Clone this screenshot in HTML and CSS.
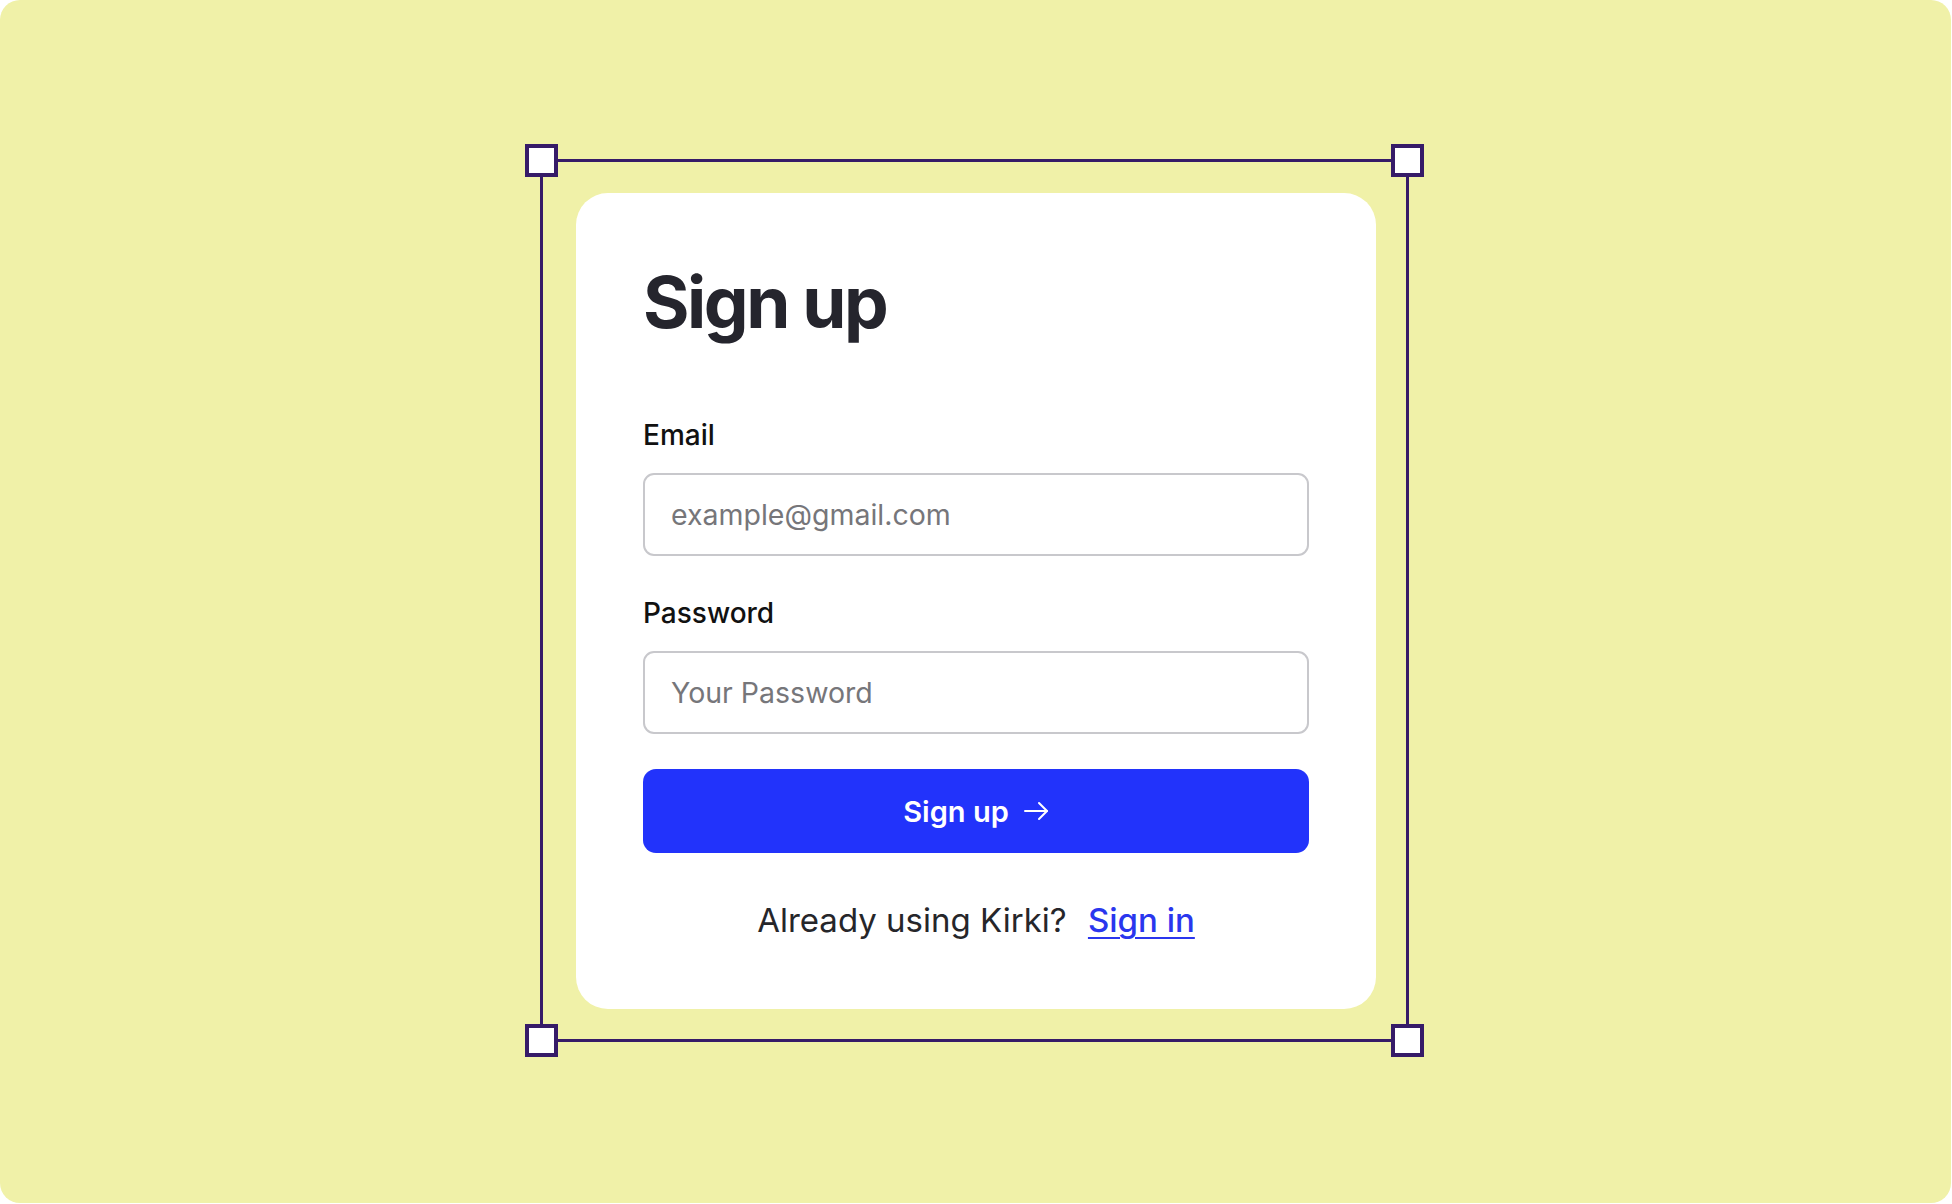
FILE: index.html
```html
<!DOCTYPE html>
<html lang="en">
<head>
<meta charset="utf-8">
<title>Sign up</title>
<link rel="stylesheet" href="styles.css">
</head>
<body>
<div class="page">
  <div class="frame">
    <span class="handle handle-tl"></span>
    <span class="handle handle-tr"></span>
    <span class="handle handle-bl"></span>
    <span class="handle handle-br"></span>
    <form class="card">
      <h1 class="title">Sign up</h1>
      <label class="label" for="email">Email</label>
      <input class="input" id="email" type="email" placeholder="example@gmail.com">
      <label class="label label-gap" for="password">Password</label>
      <input class="input" id="password" type="password" placeholder="Your Password">
      <button class="button" type="button">
        <span>Sign up</span>
        <svg class="arrow" viewBox="0 0 26 20" width="26" height="20" fill="none" stroke="#fff" stroke-width="2" stroke-linecap="round" stroke-linejoin="round"><path d="M2 10H24"/><path d="M16 2L24 10L16 18"/></svg>
      </button>
      <p class="footer">Already using Kirki? <a class="link" href="#">Sign in</a></p>
    </form>
  </div>
</div>
</body>
</html>
```
FILE: styles.css
```css
* { box-sizing: border-box; }

html, body {
  margin: 0;
  padding: 0;
  background: #ffffff;
}

body {
  font-family: "Inter", "Noto Sans", sans-serif;
  width: 1952px;
  height: 1204px;
  overflow: hidden;
}

.page {
  width: 1951px;
  height: 1203px;
  background: #f0f1a8;
  border-radius: 20px;
  display: flex;
  justify-content: center;
  align-items: flex-start;
  padding-top: 159px;
  padding-right: 2px;
}

.frame {
  position: relative;
  border: 3px solid #361b68;
  padding: 31px 30px 30px 33px;
}

.handle {
  position: absolute;
  width: 33px;
  height: 33px;
  background: #ffffff;
  border: 4px solid #361b68;
}
.handle-tl { top: -18px; left: -18px; }
.handle-tr { top: -18px; right: -18px; }
.handle-bl { bottom: -18px; left: -18px; }
.handle-br { bottom: -18px; right: -18px; }

.card {
  width: 800px;
  background: #ffffff;
  border-radius: 32px;
  padding: 73px 67px 69px 67px;
  display: flex;
  flex-direction: column;
  margin: 0;
}

.title {
  margin: 0 0 83px 0;
  font-size: 71px;
  line-height: 72px;
  font-weight: 700;
  letter-spacing: -0.035em;
  color: #25252d;
}

.label {
  display: block;
  font-size: 28px;
  line-height: 28px;
  font-weight: 500;
  color: #111111;
  margin-bottom: 24px;
}

.label-gap {
  margin-top: 43px;
}

.input {
  display: block;
  width: 100%;
  height: 83px;
  border: 2px solid #c8c8cc;
  border-radius: 11px;
  padding: 0 26px;
  font-family: "Inter", "Noto Sans", sans-serif;
  font-size: 28.5px;
  color: #222;
  background: #ffffff;
  outline: none;
}

.input::placeholder {
  color: #76767a;
}

.button {
  margin-top: 35px;
  height: 84px;
  width: 100%;
  border: none;
  border-radius: 13px;
  background: #2233fb;
  color: #ffffff;
  font-family: "Inter", "Noto Sans", sans-serif;
  font-size: 29px;
  font-weight: 600;
  display: flex;
  align-items: center;
  justify-content: center;
  gap: 14px;
  cursor: pointer;
}

.arrow {
  display: block;
}

.footer {
  margin: 47px 0 0 0;
  text-align: center;
  font-size: 33px;
  line-height: 40px;
  color: #26262a;
}

.link {
  margin-left: 12px;
  color: #2a36ee;
  font-weight: 500;
  text-decoration: underline;
  text-decoration-thickness: 2px;
  text-underline-offset: 5px;
}
```
